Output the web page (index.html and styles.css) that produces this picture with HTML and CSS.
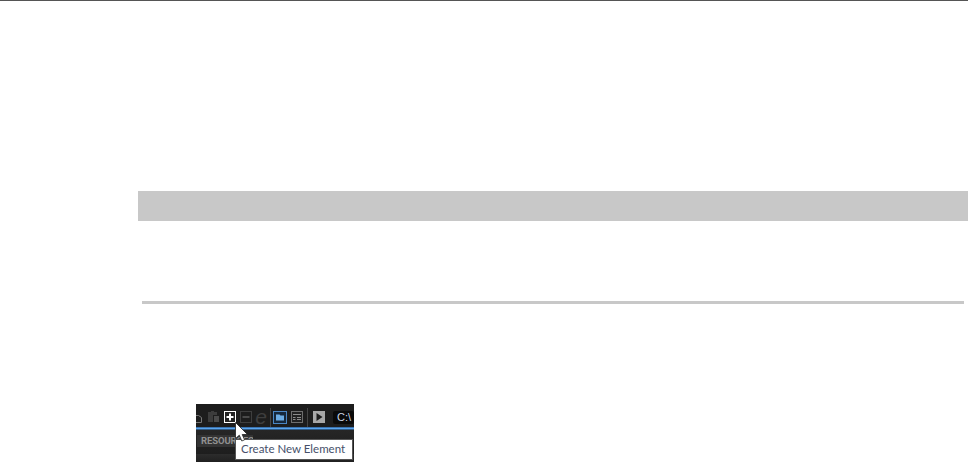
FILE: index.html
```html
<!DOCTYPE html>
<html>
  <head>
    <meta charset="UTF-8" />
    <title>Create New Element</title>
    <link rel="stylesheet" href="styles.css">
  </head>
  <body>
    <div class="top-line"></div>
    <div class="band"></div>
    <div class="rule"></div>

    <!-- anh chup thanh cong cu -->
    <div class="shot">
      <div class="toolbar">
        <svg class="ico-page" width="6" height="12" viewBox="0 0 6 12">
          <path d="M-2 4.5H2.5L5.5 6.5V11.5H-2Z" fill="none" stroke="#777" />
        </svg>
        <svg class="ico-clip" width="13" height="12" viewBox="0 0 13 12">
          <path d="M1 1H4V0H7V1H10V4H6V11H1Z" fill="#3c3c3c" />
          <path d="M7 5H12V11H7Z" fill="#4a4a4a" />
        </svg>
        <svg class="ico-plus" width="12" height="12" viewBox="0 0 12 12">
          <rect x="0.5" y="0.5" width="11" height="11" fill="#222" stroke="#fff" />
          <path d="M6 2.5V9.5M2.5 6H9.5" stroke="#fff" stroke-width="2" />
        </svg>
        <svg class="ico-minus" width="12" height="12" viewBox="0 0 12 12">
          <rect x="0.5" y="0.5" width="11" height="11" fill="none" stroke="#3e3e3e" />
          <path d="M2.5 6H9.5" stroke="#4a4a4a" stroke-width="2" />
        </svg>
        <span class="ico-e">e</span>
        <span class="sep sep-a"></span>
        <svg class="ico-folder" width="14" height="13" viewBox="0 0 14 13">
          <rect x="0.5" y="0.5" width="13" height="12" fill="#16283c" stroke="#4a86c4" />
          <path d="M3 3.5H6.5L7.5 4.5H11V9.5H3Z" fill="#6cacE4" />
        </svg>
        <svg class="ico-list" width="12" height="12" viewBox="0 0 12 12">
          <rect x="0.5" y="0.5" width="11" height="11" fill="#222" stroke="#6e6e6e" />
          <path d="M2 3.5H10M2 6.5H4.5M6 6.5H10M2 8.5H4.5M6 8.5H10" stroke="#8c8c8c" />
        </svg>
        <span class="sep sep-b"></span>
        <svg class="ico-play" width="12" height="12" viewBox="0 0 12 12">
          <rect width="12" height="12" fill="#a8a8a8" />
          <path d="M3.5 2L9.5 6L3.5 10Z" fill="#1c1c1c" />
        </svg>
        <span class="path-box">C:\</span>
      </div>
      <div class="blue-line"></div>
      <div class="tabs">
        <span class="tab">RESOURCES</span>
      </div>
      <div class="tooltip">Create New Element</div>
      <svg class="cursor" width="14" height="20" viewBox="0 0 14 20">
        <path d="M.5 .5V16.5L4.3 13.2L6.8 19L9.6 17.8L7.2 12.5H12.5Z" fill="#fff" stroke="#222" stroke-width=".8" />
      </svg>
    </div>
  </body>
</html>
```

FILE: styles.css
```css
body {
  margin: 0;
  background: #fff;
  font-family: "Open Sans", sans-serif;
  height: 462px;
  overflow: hidden;
}

.top-line {
  height: 1px;
  background: #555;
}

.band {
  height: 30px;
  margin: 190px 0 0 138px;
  background: #c8c8c8;
}

.rule {
  height: 3px;
  margin: 80px 4px 0 142px;
  background: #c8c8c8;
}

/* Anh chup */
.shot {
  position: relative;
  width: 158px;
  height: 58px;
  margin: 100px 0 0 196px;
  background: #1e1e1e;
  overflow: hidden;
}

.toolbar {
  display: flex;
  align-items: center;
  height: 23px;
  box-sizing: border-box;
  padding-top: 3px;
  background: #1d1d1d;
}

.toolbar svg {
  flex: none;
}

.ico-clip { margin-left: 5px; }
.ico-plus { margin-left: 4px; }
.ico-minus { margin-left: 4px; }

.ico-e {
  width: 12px;
  margin-left: 3px;
  font: italic 21px/16px "Liberation Sans", sans-serif;
  color: #3e3e3e;
  text-align: center;
}

.sep {
  flex: none;
  width: 1px;
  height: 19px;
  background: #444;
}

.sep-a { margin: 0 2px 0 3px; }
.ico-list { margin-left: 4px; }
.sep-b { margin-left: 4px; }
.ico-play { margin-left: 5px; }

.path-box {
  flex: none;
  margin-left: 8px;
  width: 17px;
  height: 13px;
  padding-left: 4px;
  background: #0a0a0a;
  border-radius: 2px;
  color: #c9d4e6;
  font: 11px/13px "Liberation Sans", sans-serif;
  white-space: nowrap;
  overflow: hidden;
}

.blue-line {
  height: 3px;
  background: linear-gradient(#2c5c94, #5aa4ec 50%, #1c3854);
}

.tabs {
  height: 32px;
  padding: 5px 0 0 1px;
  background: linear-gradient(#262626, #1e1e1e 65%, #2c2c2c 66%, #181818);
}

.tab {
  display: block;
  width: 52px;
  height: 12px;
  padding-left: 4px;
  background: #333;
  color: #909090;
  font: bold 9.5px/12px Roboto, sans-serif;
  letter-spacing: -0.1px;
  white-space: nowrap;
  overflow: hidden;
}

.tooltip {
  position: absolute;
  left: 39px;
  top: 35px;
  width: 118px;
  height: 21px;
  box-sizing: border-box;
  padding-left: 5px;
  background: #fff;
  border: 1px solid #555;
  color: #46506a;
  font-family: Lato, sans-serif;
  font-size: 11.5px;
  line-height: 17px;
  white-space: nowrap;
}

.cursor {
  position: absolute;
  left: 39px;
  top: 18px;
}
```
